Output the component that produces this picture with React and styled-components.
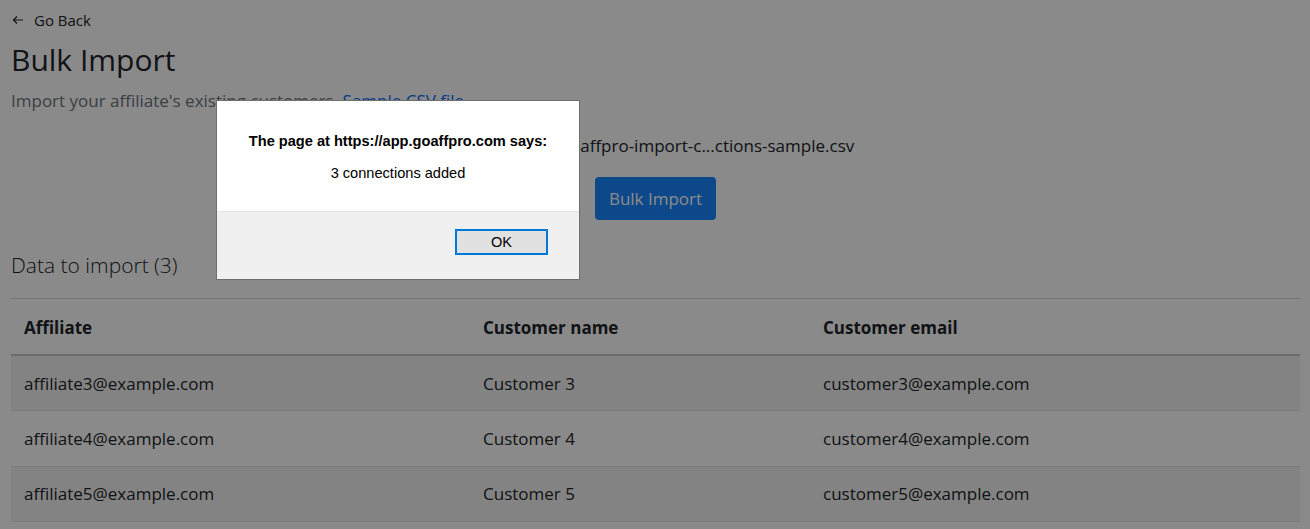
import React from "react";
import styled, { createGlobalStyle } from "styled-components";

const GlobalStyle = createGlobalStyle`
  html, body {
    margin: 0;
    padding: 0;
    background: #fff;
    font-family: "Open Sans", "Noto Sans", sans-serif;
    color: #212529;
  }
  * { box-sizing: border-box; }
`;

const Page = styled.div`
  padding: 9px 10px 20px 11px;
`;

const BackLink = styled.a`
  display: flex;
  align-items: center;
  gap: 10px;
  font-size: 15px;
  color: #212529;
  text-decoration: none;
  padding-left: 1px;
  height: 22px;
`;

const Title = styled.h1`
  margin: 9px 0 0;
  font-size: 30px;
  font-weight: 400;
  line-height: 40px;
`;

const Subtitle = styled.p`
  margin: 9px 0 0;
  font-size: 17px;
  color: #6c757d;
  line-height: 24px;

  a {
    color: #0d6efd;
    text-decoration: none;
  }
`;

const UploadBox = styled.div`
  display: flex;
  flex-direction: column;
  align-items: center;
  margin-top: 21px;
  gap: 19px;
`;

const FileRow = styled.div`
  font-size: 17px;
  line-height: 24px;
  padding-left: 104px;
`;

const PrimaryButton = styled.button`
  background: #1786ff;
  border: none;
  border-radius: 4px;
  color: #fff;
  font-family: inherit;
  font-size: 17px;
  height: 43px;
  padding: 0 14px;
`;

const SectionTitle = styled.h3`
  margin: 31px 0 0;
  font-size: 21px;
  font-weight: 300;
  line-height: 28px;
`;

const Divider = styled.hr`
  margin: 19px 0 0;
  border: none;
  border-top: 1px solid #d6d6d6;
`;

const Table = styled.table`
  width: 100%;
  border-collapse: collapse;
  font-size: 17px;
`;

const Th = styled.th`
  text-align: left;
  font-weight: 700;
  height: 56px;
  padding: 2px 13px 0;
  border-bottom: 2px solid #c8c8c8;
  width: ${(p) => p.width || "auto"};
`;

const Tr = styled.tr`
  background: ${(p) => (p.striped ? "#f2f2f2" : "transparent")};
  border-bottom: 1px solid #dee2e6;
`;

const Td = styled.td`
  height: 55.5px;
  padding: 0 13px;
`;

const Overlay = styled.div`
  position: fixed;
  inset: 0;
  background: rgba(0, 0, 0, 0.46);
`;

const Dialog = styled.div`
  position: fixed;
  left: 216px;
  top: 100px;
  width: 364px;
  height: 180px;
  background: #fff;
  border: 1px solid #6f6f6f;
  display: flex;
  flex-direction: column;
  font-family: "Liberation Sans", Arial, sans-serif;
  color: #000;
`;

const DialogBody = styled.div`
  flex: 0 0 111px;
  display: flex;
  flex-direction: column;
  align-items: center;
  padding-top: 32px;
  gap: 16px;
  border-bottom: 1px solid #e3e3e3;
`;

const DialogTitle = styled.div`
  font-weight: 700;
  font-size: 14.6px;
`;

const DialogText = styled.div`
  font-size: 14.6px;
`;

const DialogFooter = styled.div`
  flex: 1;
  background: #f0f0f0;
  display: flex;
  justify-content: flex-end;
  align-items: flex-start;
  padding: 17px 31px 0 0;
`;

const OkButton = styled.button`
  width: 93px;
  height: 26px;
  background: #e1e1e1;
  border: 2px solid #0078d7;
  font-family: inherit;
  font-size: 14.6px;
  color: #000;
`;

const rows = [3, 4, 5].map((n) => ({
  affiliate: `affiliate${n}@example.com`,
  name: `Customer ${n}`,
  email: `customer${n}@example.com`,
}));

const App = () => {
  return (
    <>
      <GlobalStyle />
      <Page>
        <BackLink href="#">
          <svg width="12" height="10" viewBox="0 0 12 10" fill="none" stroke="#212529" strokeWidth="1.2">
            <path d="M11 5H1.5M5 1.5L1.5 5L5 8.5" />
          </svg>
          Go Back
        </BackLink>
        <Title>Bulk Import</Title>
        <Subtitle>
          Import your affiliate's existing customers. <a href="#">Sample CSV file</a>
        </Subtitle>
        <UploadBox>
          <FileRow>goaffpro-import-c...ctions-sample.csv</FileRow>
          <PrimaryButton>Bulk Import</PrimaryButton>
        </UploadBox>
        <SectionTitle>Data to import (3)</SectionTitle>
        <Divider />
        <Table>
          <thead>
            <tr>
              <Th width="459px">Affiliate</Th>
              <Th width="340px">Customer name</Th>
              <Th>Customer email</Th>
            </tr>
          </thead>
          <tbody>
            {rows.map((r, i) => (
              <Tr key={r.email} striped={i % 2 === 0}>
                <Td>{r.affiliate}</Td>
                <Td>{r.name}</Td>
                <Td>{r.email}</Td>
              </Tr>
            ))}
          </tbody>
        </Table>
      </Page>
      <Overlay />
      <Dialog>
        <DialogBody>
          <DialogTitle>The page at https://app.goaffpro.com says:</DialogTitle>
          <DialogText>3 connections added</DialogText>
        </DialogBody>
        <DialogFooter>
          <OkButton>OK</OkButton>
        </DialogFooter>
      </Dialog>
    </>
  );
};

export default App;
